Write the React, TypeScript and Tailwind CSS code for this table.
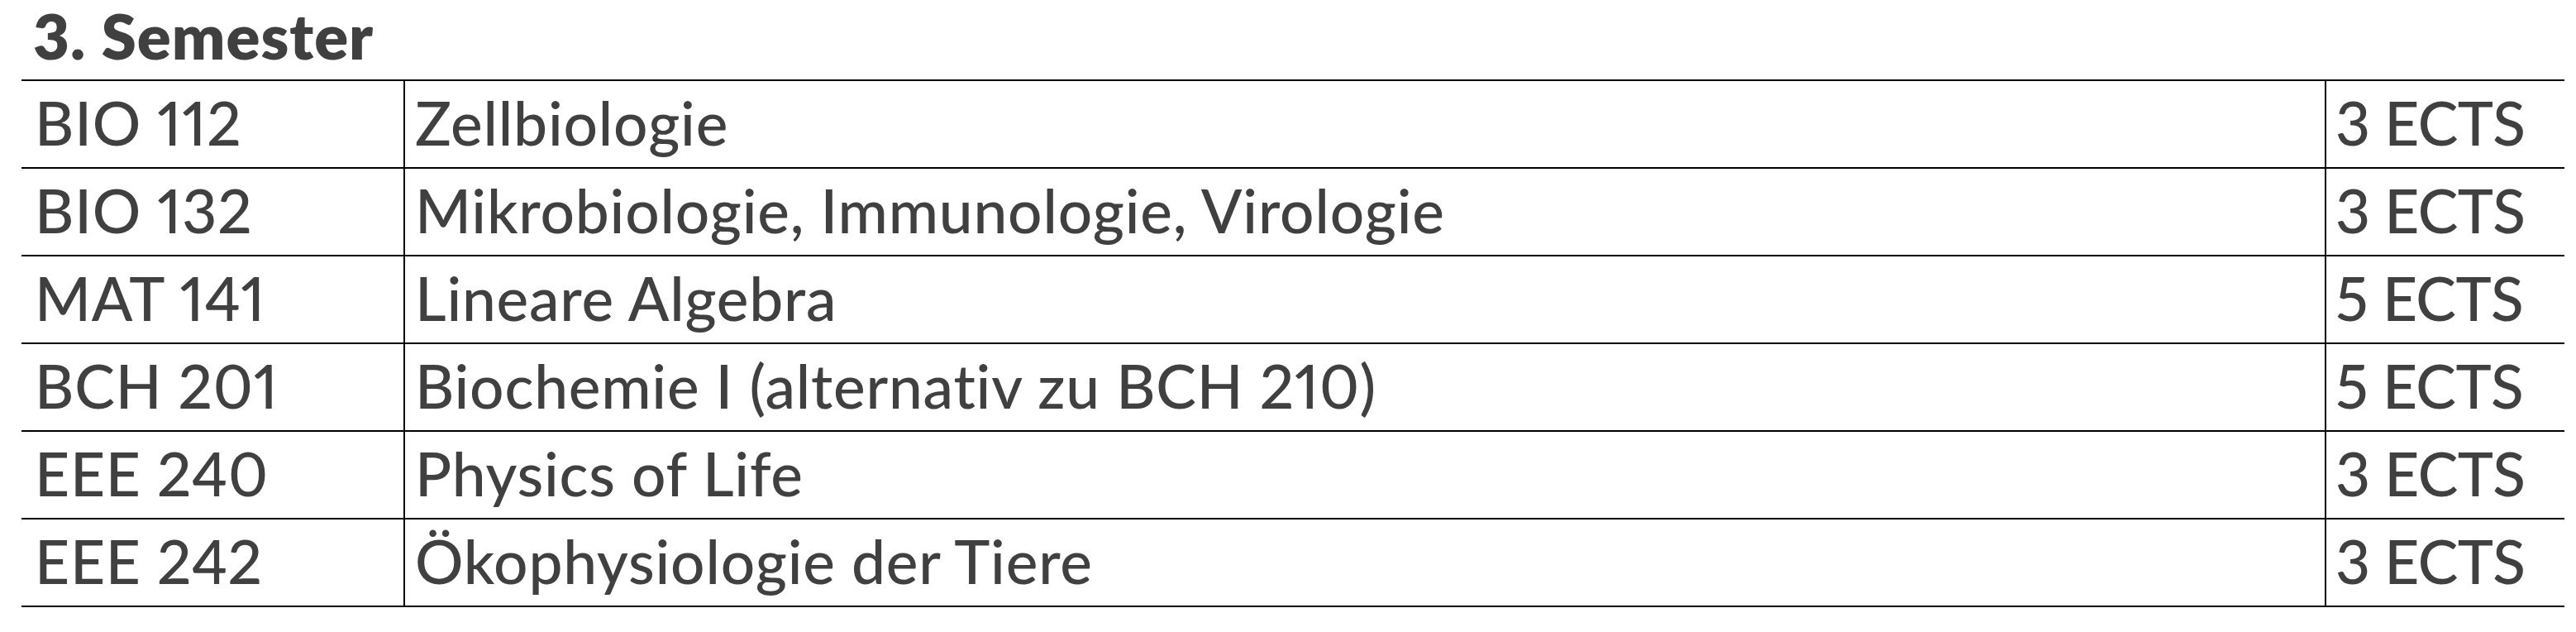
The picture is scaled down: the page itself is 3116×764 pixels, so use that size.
const courses = [
  { code: 'BIO 112', title: 'Zellbiologie', ects: '3 ECTS' },
  { code: 'BIO 132', title: 'Mikrobiologie, Immunologie, Virologie', ects: '3 ECTS' },
  { code: 'MAT 141', title: 'Lineare Algebra', ects: '5 ECTS' },
  { code: 'BCH 201', title: 'Biochemie I (alternativ zu BCH 210)', ects: '5 ECTS' },
  { code: 'EEE 240', title: 'Physics of Life', ects: '3 ECTS' },
  { code: 'EEE 242', title: 'Ökophysiologie der Tiere', ects: '3 ECTS' },
]

export default function App() {
  return (
    <div className="min-h-screen bg-white text-[#404040] font-['Lato','Noto_Sans',sans-serif] proportional-nums">
      {/* Semester heading */}
      <h2 className="pl-[40px] pb-[10px] text-[76px] font-extrabold leading-[86px] tracking-[1px]">
        3. Semester
      </h2>

      {/* Course table */}
      <div className="ml-[26px] w-[3076px] border-t-2 border-black grid grid-cols-[464px_2324px_288px] text-[73px] font-medium leading-[100px] tracking-[0.8px]">
        {courses.map((c) => (
          <div key={c.code} className="contents">
            <div className="h-[106px] pl-[16px] pb-[4px] border-b-2 border-r-2 border-black whitespace-nowrap">
              {c.code}
            </div>
            <div className="h-[106px] pl-[12px] pb-[4px] border-b-2 border-r-2 border-black whitespace-nowrap">
              {c.title}
            </div>
            <div className="h-[106px] pl-[11px] pb-[4px] border-b-2 border-black whitespace-nowrap tracking-[-0.6px]">
              {c.ects}
            </div>
          </div>
        ))}
      </div>
    </div>
  )
}
